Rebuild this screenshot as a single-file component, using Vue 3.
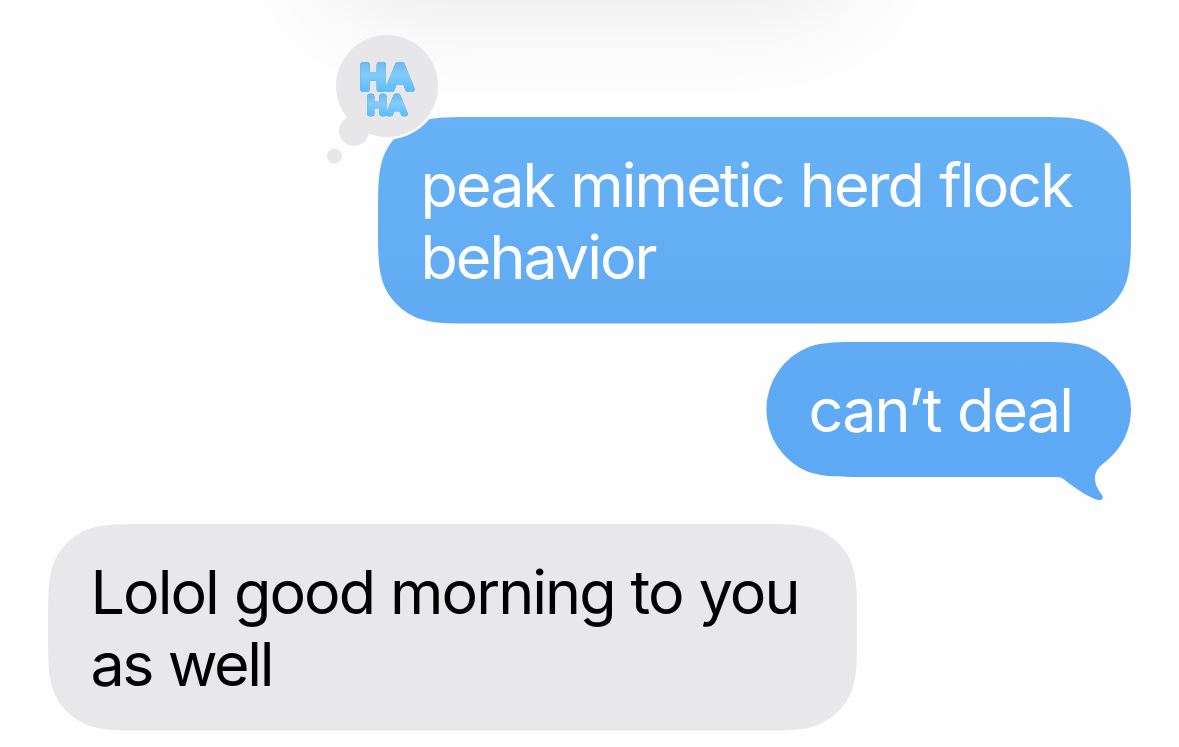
<template>
  <div class="screen">
    <div class="header-shadow"></div>
    <div
      class="row"
      :class="message.mine ? 'mine' : 'theirs'"
      v-for="message in messages"
      :key="message.id"
    >
      <div class="bubble" :style="{ width: message.width + 'px' }">
        <svg
          class="shape"
          :width="message.width"
          :height="message.height"
          :viewBox="`0 0 ${message.width} ${message.height}`"
        >
          <defs>
            <linearGradient :id="'fill' + message.id" x1="0" y1="0" x2="0" y2="1">
              <stop offset="0" :stop-color="message.colors[0]" />
              <stop offset="1" :stop-color="message.colors[1]" />
            </linearGradient>
          </defs>
          <path :d="bubblePath(message)" :fill="`url(#fill${message.id})`" />
        </svg>
        <p class="text">
          <span
            class="line"
            v-for="line in message.lines"
            :style="{ letterSpacing: line.spacing + 'px' }"
            >{{ line.text }}</span
          >
        </p>
        <svg v-if="message.reaction" class="reaction" width="116" height="134" viewBox="0 0 116 134">
          <defs>
            <linearGradient id="haha" x1="0" y1="0" x2="0" y2="1">
              <stop offset="0" stop-color="#5fb2ee" />
              <stop offset="0.45" stop-color="#84cbf9" />
              <stop offset="1" stop-color="#4dbcff" />
            </linearGradient>
          </defs>
          <path d="M114.2 63 A52 52 0 0 1 49.5 104.2" fill="none" stroke="#fbfdff" stroke-width="3" />
          <g fill="#e7e7ea">
            <circle cx="63" cy="54" r="51" />
            <circle cx="30" cy="99" r="15" />
            <circle cx="10.5" cy="124" r="7.5" />
          </g>
          <g class="haha">
            <text class="big" x="36.5" y="57">HA</text>
            <text class="small" x="43.5" y="81.7">HA</text>
          </g>
        </svg>
      </div>
    </div>
  </div>
</template>

<script setup>
import { ref } from "vue";

const messages = ref([
  {
    id: 1,
    mine: true,
    reaction: true,
    width: 753,
    height: 206.5,
    colors: ["#67b1f6", "#61abf4"],
    lines: [
      { text: "peak mimetic herd flock", spacing: -1.9 },
      { text: "behavior", spacing: -2 },
    ],
  },
  {
    id: 2,
    mine: true,
    tail: true,
    width: 365,
    height: 135,
    colors: ["#61aaf4", "#5da9f6"],
    lines: [{ text: "can’t deal", spacing: -1.8 }],
  },
  {
    id: 3,
    mine: false,
    width: 809,
    height: 206.5,
    colors: ["#e8e8eb", "#e8e8eb"],
    lines: [
      { text: "Lolol good morning to you", spacing: -1.95 },
      { text: "as well", spacing: -2.4 },
    ],
  },
]);

// continuous corners; single line bubbles have fully round ends
const bubblePath = ({ width: w, height: h, tail }) => {
  if (tail) {
    return `M95 0 H${w - 95} C${w - 73} 0 ${w - 57} 0 ${w - 42.6} 4.9
      A67.5 67.5 0 0 1 ${w} 67.5
      C${w} 88 ${w - 9} 106 ${w - 24} 118.5
      C${w - 34} 126 ${w - 36} 130 ${w - 36} 137
      C${w - 36} 143 ${w - 32} 149 ${w - 29} 153
      C${w - 27} 156 ${w - 29} 159 ${w - 33} 158
      C${w - 44} 155 ${w - 57} 145 ${w - 67} 137.5
      C${w - 70} 135.5 ${w - 71} 135 ${w - 74} 135
      H95 C73 135 57 135 42.6 130.1 A67.5 67.5 0 0 1 42.6 4.9 C57 0 73 0 95 0 Z`;
  }
  const r = 65;
  const [a, b, c, d, e, f, g] = [
    1.52866, 1.08849, 0.86841, 0.63149, 0.37282, 0.16906, 0.07491,
  ].map((n) => n * r);
  return `M${a} 0 H${w - a}
    C${w - b} 0 ${w - c} 0 ${w - d} ${g} C${w - e} ${f} ${w - f} ${e} ${w - g} ${d} C${w} ${c} ${w} ${b} ${w} ${a}
    V${h - a}
    C${w} ${h - b} ${w} ${h - c} ${w - g} ${h - d} C${w - f} ${h - e} ${w - e} ${h - f} ${w - d} ${h - g} C${w - c} ${h} ${w - b} ${h} ${w - a} ${h}
    H${a}
    C${b} ${h} ${c} ${h} ${d} ${h - g} C${e} ${h - f} ${f} ${h - e} ${g} ${h - d} C0 ${h - c} 0 ${h - b} 0 ${h - a}
    V${a}
    C0 ${b} 0 ${c} ${g} ${d} C${f} ${e} ${e} ${f} ${d} ${g} C${c} 0 ${b} 0 ${a} 0 Z`;
};
</script>

<style>
body {
  background: #fefefe;
}
</style>

<style scoped>
.screen {
  position: relative;
  box-sizing: border-box;
  width: 1179px;
  height: 747px;
  padding: 117px 48px 0;
  overflow: hidden;
  background: #fefefe;
  font-family: Inter, "Liberation Sans", sans-serif;
}
.header-shadow {
  position: absolute;
  top: -120px;
  left: 340px;
  width: 500px;
  height: 110px;
  border-radius: 55px;
  box-shadow: 0 0 105px 12px rgba(0, 0, 0, 0.1);
}
.row {
  display: flex;
}
.mine {
  justify-content: flex-end;
  color: #fff;
  margin-bottom: 18px;
}
.theirs {
  margin-top: 47px;
  color: #000;
}
.bubble {
  position: relative;
}
.shape {
  position: absolute;
  top: 0;
  left: 0;
  overflow: visible;
}
.text {
  position: relative;
  margin: 0;
  padding: 31.5px 0 31.5px 42.5px;
  font-size: 61px;
  line-height: 72px;
  word-spacing: 0.8px;
  white-space: nowrap;
}
.line {
  display: block;
}
.reaction {
  position: absolute;
  top: -85px;
  left: -54px;
  overflow: visible;
}
/* puffy lettering: thin glyphs swollen by a round stroke */
.haha text {
  font-family: "Liberation Sans", sans-serif;
  font-weight: 400;
  fill: url(#haha);
  stroke: url(#haha);
  stroke-linejoin: round;
}
.haha {
  filter: drop-shadow(0 0 0.7px #2b87cf);
}
.haha .big {
  font-size: 35px;
  letter-spacing: 2.5px;
  stroke-width: 6px;
}
.haha .small {
  font-size: 26px;
  letter-spacing: 2px;
  stroke-width: 4.5px;
}
</style>
